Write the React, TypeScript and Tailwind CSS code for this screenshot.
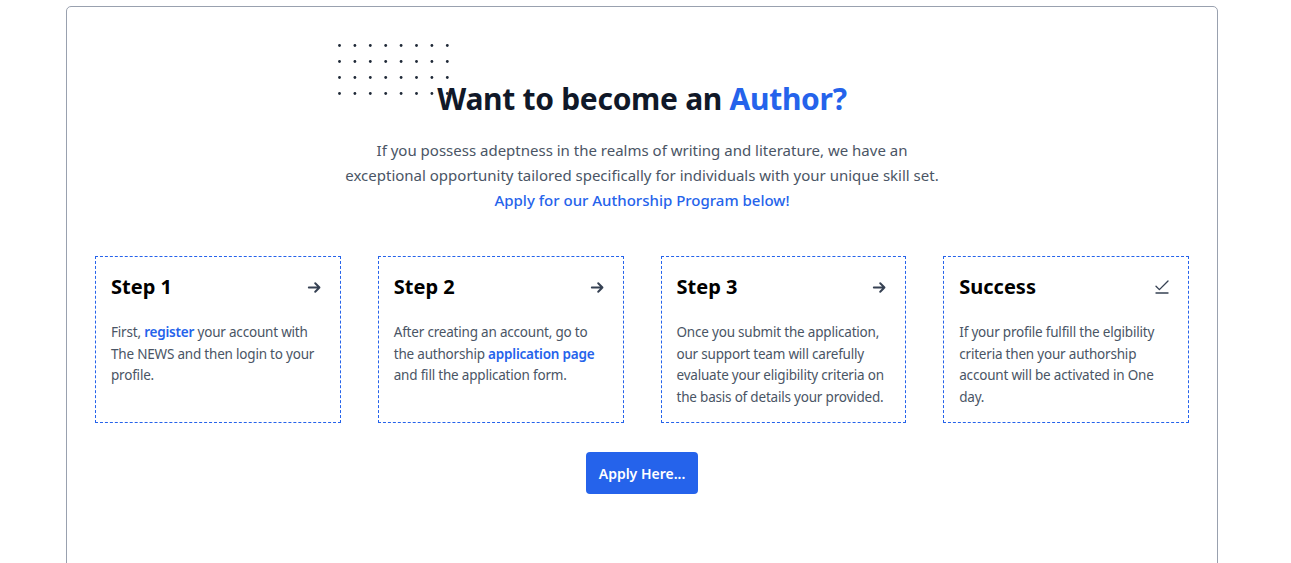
import React from "react";

const steps = [
  {
    title: "Step 1",
    icon: "arrow",
    body: (
      <>
        First, <span className="font-semibold text-[#2563eb]">register</span> your account with The
        NEWS and then login to your profile.
      </>
    ),
  },
  {
    title: "Step 2",
    icon: "arrow",
    body: (
      <>
        After creating an account, go to the authorship{" "}
        <span className="font-semibold text-[#2563eb]">application page</span> and fill the
        application form.
      </>
    ),
  },
  {
    title: "Step 3",
    icon: "arrow",
    body: (
      <>
        Once you submit the application, our support team will carefully evaluate your eligibility
        criteria on the basis of details your provided.
      </>
    ),
  },
  {
    title: "Success",
    icon: "done",
    body: (
      <>
        If your profile fulfill the elgibility criteria then your authorship account will be
        activated in One day.
      </>
    ),
  },
];

function ArrowIcon() {
  return (
    <svg viewBox="0 0 24 24" className="w-[17px] h-[17px] text-gray-700" fill="none" stroke="currentColor" strokeWidth={2.8} strokeLinecap="round" strokeLinejoin="round">
      <path d="M4 12h15M13 6l6 6-6 6" />
    </svg>
  );
}

function DoneIcon() {
  return (
    <svg viewBox="0 0 24 24" className="w-[18px] h-[18px] text-gray-700" fill="none" stroke="currentColor" strokeWidth={1.8} strokeLinecap="round" strokeLinejoin="round">
      <path d="M4 11l4.5 4.5L20 4M4 20h16" />
    </svg>
  );
}

function DotGrid() {
  const dots = [];
  for (let r = 0; r < 4; r++) {
    for (let c = 0; c < 8; c++) {
      dots.push(<circle key={`${r}-${c}`} cx={1.5 + c * 15.4} cy={1.5 + r * 16} r={1.4} fill="#1f2937" />);
    }
  }
  return (
    <svg width="112" height="52" className="absolute left-[271px] top-[37px]">
      {dots}
    </svg>
  );
}

export default function App() {
  return (
    <div className="w-full bg-white" style={{ fontFamily: '"Noto Sans", sans-serif' }}>
      <div className="relative ml-[66px] mt-[6px] w-[1152px] h-[580px] border border-gray-400 rounded-[5px] px-[28px]">
        <DotGrid />
        <div className="flex flex-col items-center pt-[72px]">
          <h1 className="relative text-[30px] leading-[40px] font-bold text-gray-900 tracking-[-0.3px]">
            Want to become an <span className="text-[#2563eb]">Author?</span>
          </h1>
          <p className="mt-[19px] w-[604px] text-center text-[15px] leading-[25px] text-gray-600">
            If you possess adeptness in the realms of writing and literature, we have an exceptional
            opportunity tailored specifically for individuals with your unique skill set.
            <br />
            <span className="font-medium text-[#2563eb]">Apply for our Authorship Program below!</span>
          </p>
        </div>

        <div className="mt-[43px] grid grid-cols-4 gap-[37px]">
          {steps.map((s) => (
            <div key={s.title} className="h-[167px] border border-dashed border-[#2563eb] px-[15px] pt-[16px]">
              <div className="flex items-center justify-between pr-[2px]">
                <h3 className="text-[20px] leading-[28px] font-bold text-black">{s.title}</h3>
                {s.icon === "arrow" ? <ArrowIcon /> : <DoneIcon />}
              </div>
              <p className="mt-[21px] text-[13.5px] leading-[21.7px] tracking-[-0.2px] text-gray-600">{s.body}</p>
            </div>
          ))}
        </div>

        <div className="mt-[29px] flex justify-center">
          <button className="h-[42px] px-[13px] rounded-[4px] bg-[#2563eb] text-[14px] font-semibold text-white">
            Apply Here...
          </button>
        </div>
      </div>
    </div>
  );
}
